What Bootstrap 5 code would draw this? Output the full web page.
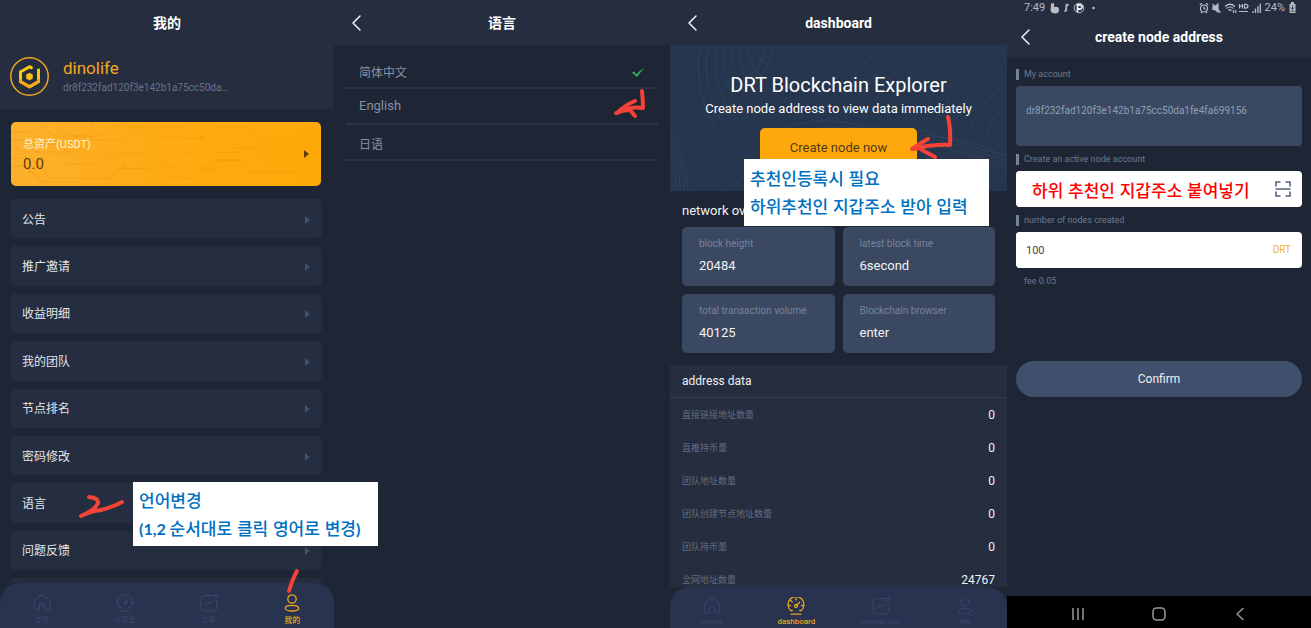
<!DOCTYPE html>
<html lang="zh-CN">
<head>
<meta charset="utf-8">
<meta name="viewport" content="width=device-width, initial-scale=1">
<title>DRT wallet guide</title>
<link href="https://cdn.jsdelivr.net/npm/bootstrap@5.3.0/dist/css/bootstrap.min.css" rel="stylesheet">
<style>
:root { --night:#1e2636; --bar:#252d3f; --tab:#28334f; --gold:#fea80c; --tile:#3b4862; --pen:#f44336; }
body { background:var(--night); color:#e8eaee; font-family:Roboto,"Noto Sans CJK SC",sans-serif; font-size:13px; line-height:20px; }
.board { display:grid; grid-template-columns:334fr 336fr 337fr 304fr; min-height:100vh; }
.screen { position:relative; display:flex; flex-direction:column; height:100vh; min-width:0; background:var(--night); }
.topbar { background:var(--bar); height:45px; display:grid; grid-template-columns:44px 1fr 44px; align-items:center; flex:none; }
.topbar h1 { font-size:14px; line-height:20px; font-weight:700; margin:0; color:#fff; text-align:center; grid-column:2; }
.plain { background:none; border:0; padding:0; color:inherit; text-align:left; }
.topbar .plain { height:24px; padding-left:16px; line-height:0; grid-row:1; display:flex; align-items:center; }
.topbar.slim { height:43px; }
.topbar.slim .plain { padding-left:12px; }
svg { display:block; flex:none; }
.profile { background:var(--bar); padding:11px 10px 13px; gap:14px; }
.uname { color:#f5a623; font-size:17px; line-height:24px; }
.addr { color:#68748a; font-size:10px; line-height:16px; }
.menu { padding:13px 12px 0 10px; min-height:0; }
.menu button { background:#242e40; border-radius:5px; padding:2px 12px 0; font-size:12px; color:#e3e5e9; min-height:0; }
.menu .asset { position:relative; height:64px; overflow:hidden; background:linear-gradient(90deg,#fcb02c,#feab12 50%,#ffa908); margin:0 1px 4px; padding-top:0; color:#5f3c0b; }
.asset .traces { position:absolute; inset:0; width:100%; height:100%; }
.asset .money { position:relative; }
.asset small { color:#fff3d6; font-size:11px; line-height:18px; display:block; padding-top:2px; }
.asset b { font-weight:400; font-size:15px; line-height:20px; display:block; }
.rows { padding-top:9px; min-height:0; }
.peek { height:5px; background:#242e40; border-radius:5px 5px 0 0; }
.tri { width:0; height:0; border:4px solid transparent; border-left:5px solid #44516b; border-right:0; }
.asset .tri { border-left-color:#5f3c0b; position:relative; }
.tabs { background:var(--tab); height:45px; border-radius:20px 20px 0 0; display:flex; flex:none; padding:11px 0 0; }
.tabs.low { height:41px; padding:10px 0 0; }
.tabs a { flex:1; text-decoration:none; color:#3b4868; font-size:7px; line-height:11px; display:flex; flex-direction:column; align-items:center; gap:3px; }
.tabs.low a { font-size:8px; gap:1px; }
.tabs a.on { color:#eba41f; font-weight:500; font-size:8px; }
.ic { fill:none; stroke:currentColor; stroke-linecap:round; stroke-linejoin:round; }
.langs { padding:8px 12px 0; }
.langs button { height:36px; border-bottom:2px solid #2a3445; color:#8491a3; font-size:13px; padding:0 13px; }
.langs button:lang(zh) { font-size:12px; padding-top:5px; }
.note { position:absolute; z-index:5; width:245px; background:#fff; color:#0070c0; font-family:"Noto Sans CJK KR",sans-serif; font-size:17px; font-weight:500; line-height:28px; padding:4px 6px; white-space:nowrap; }
.note.tall { padding:5px 6px 6px; }
.note b { font-family:Lato,sans-serif; font-size:16px; line-height:20px; }
.pen { position:absolute; z-index:4; fill:none; stroke:var(--pen); stroke-linecap:round; stroke-linejoin:round; pointer-events:none; }
.hero { position:relative; height:146px; background:#27364f; text-align:center; color:#fff; padding-top:26px; overflow:hidden; flex:none; }
.hero .waves { position:absolute; inset:0; width:100%; height:100%; fill:none; stroke:#fff; stroke-opacity:.045; }
.hero h2 { position:relative; font-size:20px; line-height:28px; font-weight:400; margin:0; }
.hero p { position:relative; font-size:13px; line-height:20px; margin:0 0 9px; }
.hero .btn { position:relative; width:157px; height:40px; padding:0; background:var(--gold); color:#523b16; border:0; border-radius:5px; font-size:13px; }
.overview { padding:10px 12px 12px; }
.overview h3, .addresses h3 { font-size:12px; line-height:20px; margin:0; font-weight:400; color:#f0f1f3; }
.overview h3 { font-size:13px; }
.tiles { display:grid; grid-template-columns:1fr 1fr; gap:8px; margin-top:6px; }
.tile { background:var(--tile); border-radius:5px; height:59px; padding:9px 17px; }
.tile dt { font-weight:400; font-size:10px; line-height:16px; color:#76839b; }
.tile dd { margin:4px 0 0; font-size:13px; line-height:20px; color:#f2f3f5; }
.addresses { background:var(--bar); min-height:0; overflow:hidden; }
.addresses h3 { padding:6px 12px; border-bottom:1px solid #333d50; }
.addresses table { width:100%; }
.addresses tr { height:33px; }
.addresses th { font-weight:400; font-size:9px; color:#626d81; padding:0 12px; }
.addresses td { font-size:12px; text-align:right; color:#f2f3f5; padding:0 12px; }
.status { background:var(--bar); height:15px; padding:0 15px 0 17px; color:#b7bcc5; font-size:11px; line-height:15px; flex:none; }
.form-area { padding:6px 9px 0; }
.tag { color:#6d7a90; font-size:9px; line-height:11px; border-left:3px solid #74839d; padding-left:5px; display:block; margin:8px 0 6px; }
.tag:first-child { margin-top:5px; }
.form-area .form-control { border:0; border-radius:4px; font-size:11px; padding:0 10px; height:36px; color:#444; background:#fff; box-shadow:none; }
.form-area textarea.form-control { background:var(--tile); color:#8ba0b8; height:60px; font-size:10px; line-height:16px; padding:17px 10px; resize:none; display:block; overflow:hidden; }
.box { background:#fff; border-radius:4px; display:flex; align-items:center; padding-right:11px; height:36px; }
.form-area .paste { color:#f00; font:500 17px/24px "Noto Sans CJK KR",sans-serif; padding:0 0 0 16px; }
.unit { color:#f0b52e; font-size:10px; }
.confirm { background:#40506c; color:#eef0f3; border:0; border-radius:18px; height:36px; padding:0; font-size:12px; width:100%; margin-top:68px; }
.sysnav { background:#000; height:32px; color:#9a9a9a; padding:3px 64px 0; margin-top:auto; flex:none; }
</style>
</head>
<body>
<svg width="0" height="0" class="position-absolute" aria-hidden="true">
  <symbol id="home" viewBox="0 0 18 18"><path d="M3 16h2.500q1 0 1-1v-3a2.500 2.500 0 0 1 5 0v3q0 1 1 1H15q1.800 0 1.800-1.800V8q0-1.500-1.200-2.500L11 2Q9 .500 7 2L2.400 5.500Q1.200 6.500 1.200 8v6.200Q1.200 16 3 16z"/></symbol>
  <symbol id="gauge" viewBox="0 0 18 18"><path d="M3.600 13.500a8 8 0 1 1 10.800 0h-1.700M3.600 13.500h1.700M4 17.200h10M9 1v2M1.500 8.500h2M14.500 8.500h2M3.800 3.500l1.400 1.400M12.700 5.200 10 8"/><circle cx="9" cy="9" r="1.500"/></symbol>
  <symbol id="trade" viewBox="0 0 18 18"><path d="M12 1.500H5Q1 1.500 1 5v8q0 4 4 4h8q4 0 4-4V6.500M4.500 11.500l3-4 3 2.500 3-3.500"/><circle cx="15.800" cy="2.200" r="1.600"/></symbol>
  <symbol id="person" viewBox="0 0 18 18"><circle cx="9" cy="5" r="4.200"/><ellipse cx="9" cy="14.200" rx="6.700" ry="2.800"/></symbol>
  <symbol id="back" viewBox="0 0 12 18"><path d="M10 2 3 9l7 7"/></symbol>
</svg>

<main class="board">
  <section class="screen">
    <header class="topbar"><h1>我的</h1></header>
    <div class="profile d-flex align-items-center">
      <svg width="39" height="39" viewBox="0 0 39 39" fill="none">
        <circle cx="19.500" cy="19.500" r="18.700" stroke="#f0a320" stroke-width="1.500"/>
        <path d="M22.500 9.600 19.500 8 9 14v11.500l10.500 6 10.500-6V11.500l-3 .500v11.800l-7.500 4.200-7.500-4.200v-8l7.500-4.300 1.500 1 2-1z" fill="#f9c80e"/>
        <path d="M9 21v4.500l10.500 6 10.500-6V21l-3 1.500v1.300l-7.500 4.200-7.500-4.200z" fill="#f5a91c"/>
        <path d="m19.500 15.800 3.300 1.800v4l-3.300 2-3.300-2v-4z" fill="#f9bf10"/>
      </svg>
      <div>
        <div class="uname">dinolife</div>
        <div class="addr">dr8f232fad120f3e142b1a75cc50da…</div>
      </div>
    </div>
    <div class="menu d-flex flex-column flex-grow-1">
      <button class="plain asset d-flex align-items-center justify-content-between flex-shrink-0">
        <svg class="traces" viewBox="0 0 310 64" preserveAspectRatio="none" fill="none" stroke="#d98600" stroke-opacity=".22">
          <path d="M0 10h18l12 12h28l8-8h24l10-10h30M0 18h12l12 12h44l10-12h34l12-12h50M0 44h14l16 16h38M0 36h20l20 20h60l9-9h26M56 42h28l10-10h40l16-16h42M30 2l12 12h26M98 58l12-12h52l14-16h54M150 56h34l18-18h40M140 36l10 10M144 34l12 12M148 32l14 14M206 6h30l16 16h34M196 50l12-12h20l12 12h50M222 26h22l12 12h42M80 0v8l-8 8M170 60l14-14h24M10 56l8 8M4 26l14 12v10l12 10"/>
          <circle cx="68" cy="14" r="1.500"/><circle cx="101" cy="36" r="1.500"/><circle cx="112" cy="44" r="1.500"/><circle cx="190" cy="16" r="1.500"/>
        </svg>
        <span class="money"><small>总资产(USDT)</small><b>0.0</b></span><span class="tri"></span>
      </button>
      <div class="rows d-flex flex-column flex-grow-1 gap-2">
        <button class="plain flex-fill d-flex align-items-center justify-content-between">公告<span class="tri"></span></button>
        <button class="plain flex-fill d-flex align-items-center justify-content-between">推广邀请<span class="tri"></span></button>
        <button class="plain flex-fill d-flex align-items-center justify-content-between">收益明细<span class="tri"></span></button>
        <button class="plain flex-fill d-flex align-items-center justify-content-between">我的团队<span class="tri"></span></button>
        <button class="plain flex-fill d-flex align-items-center justify-content-between">节点排名<span class="tri"></span></button>
        <button class="plain flex-fill d-flex align-items-center justify-content-between">密码修改<span class="tri"></span></button>
        <button class="plain flex-fill d-flex align-items-center justify-content-between">语言<span class="tri"></span></button>
        <button class="plain flex-fill d-flex align-items-center justify-content-between">问题反馈<span class="tri"></span></button>
        <div class="peek"></div>
      </div>
    </div>
    <nav class="tabs">
      <a href="#"><svg class="ic" width="18" height="18"><use href="#home"/></svg>首页</a>
      <a href="#"><svg class="ic" width="18" height="18"><use href="#gauge"/></svg>仪表盘</a>
      <a href="#"><svg class="ic" width="18" height="18"><use href="#trade"/></svg>交易</a>
      <a href="#" class="on"><svg class="ic" width="18" height="18" stroke-width="1.300"><use href="#person"/></svg>我的</a>
    </nav>
    <svg class="pen" style="left:76px;top:490px" width="50" height="30" stroke-width="4"><path d="M13 7q10 1 9 6-3 7-17 13 10-5 20-6 12-3 21-8" /></svg>
    <svg class="pen" style="left:284px;top:566px" width="18" height="30" stroke-width="4"><path d="M13 5Q9 12 5 25"/></svg>
    <div class="note" lang="ko" style="left:133px;top:482px">언어변경<br><b>(1,2 </b>순서대로 클릭 영어로 변경<b>)</b></div>
  </section>

  <section class="screen">
    <header class="topbar"><h1>语言</h1>
      <button class="plain" aria-label="Back"><svg class="ic" width="12" height="18" stroke-width="1.600"><use href="#back"/></svg></button></header>
    <div class="langs d-flex flex-column">
      <button class="plain d-flex align-items-center justify-content-between" lang="zh">简体中文
        <svg width="13" height="10" viewBox="0 0 13 10"><path d="M0 4.500 1.800 3.500l2.700 3Q8 2 13 .300 8.500 3.500 5 9z" fill="#36b35c"/></svg></button>
      <button class="plain" lang="en">English</button>
      <button class="plain" lang="zh">日语</button>
    </div>
    <svg class="pen" style="left:276px;top:86px" width="42" height="34" stroke-width="4"><path d="M32 5q1 9 1 17-12-2-26 5 8-8 18-12M6 27q8-3 14-3l5 6"/></svg>
  </section>

  <section class="screen" lang="en">
    <header class="topbar"><h1>dashboard</h1>
      <button class="plain" aria-label="Back"><svg class="ic" width="12" height="18" stroke-width="1.600"><use href="#back"/></svg></button></header>
    <div class="hero">
      <svg class="waves" viewBox="0 0 337 146" preserveAspectRatio="none">
        <path d="M30 0q-8 50 20 90M38 0q-8 50 20 85M46 0q-6 45 22 78M54 0q-6 40 24 70M62 0q-4 36 26 60M70 0q-2 30 24 50M78 0q0 24 20 36M86 0q0 15 14 22M104 0q-4 30-30 45M96 0q-4 25-26 38M158 48Q170 20 195 0M172 48Q190 20 215 0M190 50q18-28 45-50M205 55q20-33 50-55M222 58q20-35 52-58M238 62q20-38 54-62M253 67q20-42 58-67M268 72q22-46 64-72M284 78q18-42 53-62M300 84q12-30 37-46M316 90q6-20 21-28"/>
        <path d="M0 85q16 20 18 61M0 92q14 20 14 54M0 100q10 18 10 46M0 108q7 16 6 38M30 146Q50 110 95 90T180 78 270 92 337 116M45 146Q60 116 105 96T200 84 337 120M60 146Q80 120 125 102T230 94 337 124M250 84q40 16 87 26M260 92q40 12 77 24"/>
      </svg>
      <h2>DRT Blockchain Explorer</h2>
      <p>Create node address to view data immediately</p>
      <button class="btn">Create node now</button>
    </div>
    <div class="overview">
      <h3>network ov</h3>
      <dl class="tiles mb-0">
        <div class="tile"><dt>block height</dt><dd>20484</dd></div>
        <div class="tile"><dt>latest block time</dt><dd>6second</dd></div>
        <div class="tile"><dt>total transaction volume</dt><dd>40125</dd></div>
        <div class="tile"><dt>Blockchain browser</dt><dd>enter</dd></div>
      </dl>
    </div>
    <div class="addresses flex-grow-1">
      <h3>address data</h3>
      <table lang="zh">
        <tr><th scope="row">直接链接地址数量</th><td>0</td></tr>
        <tr><th scope="row">直推持币量</th><td>0</td></tr>
        <tr><th scope="row">团队地址数量</th><td>0</td></tr>
        <tr><th scope="row">团队创建节点地址数量</th><td>0</td></tr>
        <tr><th scope="row">团队持币量</th><td>0</td></tr>
        <tr><th scope="row">全网地址数量</th><td>24767</td></tr>
      </table>
    </div>
    <nav class="tabs low">
      <a href="#"><svg class="ic" width="18" height="18"><use href="#home"/></svg>Home</a>
      <a href="#" class="on"><svg class="ic" width="18" height="18" stroke-width="1.300"><use href="#gauge"/></svg>dashboard</a>
      <a href="#"><svg class="ic" width="18" height="18"><use href="#trade"/></svg>transaction</a>
      <a href="#"><svg class="ic" width="18" height="18"><use href="#person"/></svg>Me</a>
    </nav>
    <svg class="pen" style="left:238px;top:112px" width="48" height="48" stroke-width="4"><path d="M40 5q3 12 2 28-16-1-38 4Q14 30 20 27M4 37q10 0 14-3M14 38l13 7"/></svg>
    <div class="note tall" lang="ko" style="left:74px;top:159px">추천인등록시 필요<br>하위추천인 지갑주소 받아 입력</div>
  </section>

  <section class="screen" lang="en">
    <div class="status d-flex align-items-center">
      <span>7:49</span>
      <svg class="ms-1" width="50" height="12" viewBox="0 0 50 12" fill="#b7bcc5"><path d="M2 1.500 5 1v4q5-1 5 3 0 3.500-4 3.500T1.500 8z"/><path d="M20 2q-4-1-3.500 2 .500 2-1.500 6 4 0 3-3-.500-2 2-5z"/><circle cx="30" cy="6" r="4.800" fill="none" stroke="#b7bcc5"/><path d="M28.500 10V3h2.500a2 2 0 0 1 0 4h-2" fill="none" stroke="#e8eaee" stroke-width="1.800"/><circle cx="44.500" cy="6" r="1.300"/></svg>
      <svg class="ms-auto" width="62" height="12" viewBox="0 0 62 12" fill="none" stroke="#b7bcc5" stroke-width="1.200">
        <circle cx="5" cy="6.500" r="3.500"/><path d="M5 4.500v2l1.500 1M.800 3 3 1.200M9.200 3 7 1.200M2 11l1-1M8 11l-1-1"/>
        <path d="M14 4.500h2L19 2v8l-3-2.500h-2z" fill="#b7bcc5"/><path d="m13.500 2 8 8.500"/>
        <path d="M26 4.500q5-4.500 10 0M27.500 6.500q3.500-3 7 0M29.500 8.500q1.500-1.500 3 0M34.500 8v3M36.800 8v3"/>
        <path d="M40.500 2v4.500M43.500 2v4.500M40.500 4.200h3M45.500 2.200v4q3.500 0 3.500-2t-3.500-2M40 9.500h9" />
        <path d="M54 11V9M56.500 11V6.500M59 11V4M61.300 11V1.500" stroke-width="1.300"/></svg>
      <span class="mx-1">24%</span>
      <svg width="7" height="11" viewBox="0 0 7 11" fill="#b7bcc5"><path d="M2 0h3v2h1.500v9H.500V2H2z"/><path d="M3.500 3v4M1.800 5.500l1.700 2 1.700-2M1.500 9.200h4" fill="none" stroke="#252d3f" stroke-width=".8"/></svg>
    </div>
    <header class="topbar slim"><h1>create node address</h1>
      <button class="plain" aria-label="Back"><svg class="ic" width="12" height="18" stroke-width="1.600"><use href="#back"/></svg></button></header>
    <form class="form-area">
      <label class="tag" for="acct">My account</label>
      <textarea id="acct" class="form-control" readonly>dr8f232fad120f3e142b1a75cc50da1fe4fa699156</textarea>
      <label class="tag" for="node">Create an active node account</label>
      <div class="box"><input id="node" lang="ko" class="form-control paste" value="하위 추천인 지갑주소 붙여넣기">
        <button type="button" class="plain" aria-label="Scan"><svg width="16" height="16" viewBox="0 0 16 16" fill="none" stroke="#56657d" stroke-width="1.600"><path d="M1 5.500V1h4.500M10.500 1H15v4.500M15 10.500V15h-4.500M5.500 15H1v-4.500M.500 8h15"/></svg></button></div>
      <label class="tag" for="num">number of nodes created</label>
      <div class="box"><input id="num" class="form-control" value="100"><span class="unit">DRT</span></div>
      <div class="tag border-0 ps-2">fee 0.05</div>
      <button type="button" class="btn confirm">Confirm</button>
    </form>
    <nav class="sysnav d-flex align-items-center justify-content-between">
      <button class="plain" aria-label="Recents"><svg class="ic" width="14" height="14"><path d="M2 1v12M7 1v12M12 1v12" stroke-width="1.500" stroke-linecap="butt"/></svg></button>
      <button class="plain" aria-label="Home"><svg class="ic" width="14" height="14"><rect x="1" y="1" width="12" height="12" rx="3.500" stroke-width="1.500"/></svg></button>
      <button class="plain" aria-label="Back"><svg class="ic" width="14" height="14"><path d="M10 1.500 4 7l6 5.500" stroke-width="1.500"/></svg></button>
    </nav>
  </section>
</main>
<script src="https://cdn.jsdelivr.net/npm/bootstrap@5.3.0/dist/js/bootstrap.bundle.min.js"></script>
</body>
</html>
